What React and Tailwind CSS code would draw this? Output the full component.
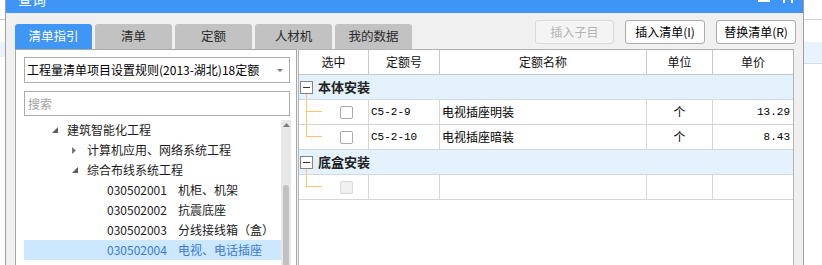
import React from "react";

const tabs = ["清单指引", "清单", "定额", "人材机", "我的数据"];

const treeRows = [
  { level: 0, open: true, text: "建筑智能化工程" },
  { level: 1, open: false, text: "计算机应用、网络系统工程" },
  { level: 1, open: true, text: "综合布线系统工程" },
  { level: 2, code: "030502001", text: "机柜、机架" },
  { level: 2, code: "030502002", text: "抗震底座" },
  { level: 2, code: "030502003", text: "分线接线箱（盒）" },
  { level: 2, code: "030502004", text: "电视、电话插座", selected: true },
];

const groups = [
  {
    name: "本体安装",
    rows: [
      { code: "C5-2-9", name: "电视插座明装", unit: "个", price: "13.29" },
      { code: "C5-2-10", name: "电视插座暗装", unit: "个", price: "8.43" },
    ],
  },
  { name: "底盒安装", rows: [{ empty: true }] },
];

const ArrowOpen = () => (
  <svg width="6" height="6" viewBox="0 0 6 6">
    <polygon points="6,0 6,6 0,6" fill="#5c5c5c" />
  </svg>
);

const ArrowClosed = () => (
  <svg width="4" height="7" viewBox="0 0 4 7">
    <polygon points="0,0 4,3.5 0,7" fill="#767676" />
  </svg>
);

const TreeRow = ({ row }) => {
  const pad = row.level === 0 ? "pl-[28px]" : row.level === 1 ? "pl-[48px]" : "pl-[83px]";
  return (
    <div
      className={`h-[20px] flex items-center ${pad} ${
        row.selected ? "bg-[#cce8ff] text-[#3b79d5]" : "text-[#1b1b1b]"
      }`}
    >
      {row.level < 2 ? (
        <>
          <div className="w-[15px] flex items-center">
            {row.open ? <ArrowOpen /> : <ArrowClosed />}
          </div>
          <span>{row.text}</span>
        </>
      ) : (
        <>
          <span className="w-[71px]">{row.code}</span>
          <span>{row.text}</span>
        </>
      )}
    </div>
  );
};

const DataRow = ({ row, last }) => (
  <div className="h-[25px] grid grid-cols-[70px_71px_207px_66px_1fr] border-b border-[#d6d6d6]">
    <div className="flex border-r border-[#d6d6d6]">
      <div className="w-[7px]" />
      <div className="w-[16px] flex flex-col">
        <div className="h-[12px] border-l border-b border-[#fdc66c]" />
        {!last && <div className="flex-1 border-l border-[#fdc66c]" />}
      </div>
      <div className="ml-[18px] flex items-center">
        <div
          className={`w-[13px] h-[13px] rounded-[2px] border ${
            row.empty ? "bg-[#f0f0f0] border-[#d9d9d9]" : "bg-white border-[#a9a9a9]"
          }`}
        />
      </div>
    </div>
    <div className="flex items-center pl-[2px] border-r border-[#d6d6d6] font-['Liberation_Mono',monospace] text-[11px]">
      {row.code}
    </div>
    <div className="flex items-center pl-[2px] border-r border-[#d6d6d6]">{row.name}</div>
    <div className="flex items-center justify-center border-r border-[#d6d6d6]">{row.unit}</div>
    <div className="flex items-center justify-end pr-[3px] font-['Liberation_Mono',monospace] text-[11px]">
      {row.price}
    </div>
  </div>
);

export default function App() {
  return (
    <div className="w-[822px] h-[265px] bg-white flex overflow-hidden font-['Noto_Sans_CJK_SC',sans-serif] text-[12px] text-black">
      {/* outside, left */}
      <div className="w-[5px] flex flex-col">
        <div className="h-[19px]" />
        <div className="h-px bg-[#c4c4c4]" />
        <div className="h-[22px]" />
        <div className="h-[15px] bg-[#e9f3fd]" />
      </div>

      {/* dialog */}
      <div className="w-[799px] h-full flex flex-col bg-[#f0f0f0] border-x border-[#9e9e9e]">
        {/* title bar */}
        <div className="h-[13px] shrink-0 bg-[#3e95f5] flex overflow-hidden">
          <div className="pl-[12px] -mt-[8px] text-[14px] leading-[14px] text-white">查询</div>
          <div className="flex-1" />
          <div className="w-[12px] h-[2px] bg-white" />
          <div className="ml-[13px] flex gap-[6px]">
            <div className="w-[2px] h-[3px] bg-white" />
            <div className="w-[2px] h-[3px] bg-white" />
          </div>
          <div className="w-[10px]" />
        </div>

        {/* tabs and buttons */}
        <div className="h-[36px] shrink-0 flex pl-[9px] pr-[7px]">
          <div className="flex items-end gap-[3px]">
            {tabs.map((t, i) => (
              <div
                key={t}
                className={`w-[77px] h-[25px] rounded-t-[3px] flex items-center justify-center text-[12.5px] ${
                  i === 0 ? "bg-[#3f96f4] text-white" : "bg-[#c2c2c2] text-[#2b2b2b]"
                }`}
              >
                {t}
              </div>
            ))}
          </div>
          <div className="flex-1" />
          <div className="mt-[7px] flex gap-[11px] h-[24px]">
            <div className="w-[79px] rounded-[3px] border border-[#dadada] bg-[#f4f4f4] text-[#b3b3b3] flex items-center justify-center">
              插入子目
            </div>
            <div className="w-[80px] rounded-[3px] border border-[#adadad] bg-[#fdfdfd] flex items-center justify-center">
              插入清单(I)
            </div>
            <div className="w-[80px] rounded-[3px] border border-[#adadad] bg-[#fdfdfd] flex items-center justify-center">
              替换清单(R)
            </div>
          </div>
        </div>

        {/* main */}
        <div className="flex-1 flex pl-[9px] pr-[9px] min-h-0">
          {/* left panel */}
          <div className="w-[282px] bg-white border-x border-t border-[#a8a8a8] pl-[8px] pt-[7px] flex flex-col">
            <div className="w-[266px] h-[26px] border border-[#ababab] flex items-center pl-[2px] pr-[6px]">
              <span className="flex-1">工程量清单项目设置规则(2013-湖北)18定额</span>
              <svg width="6" height="3" viewBox="0 0 6 3">
                <polygon points="0,0 6,0 3,3" fill="#7a7a7a" />
              </svg>
            </div>
            <div className="mt-[8px] w-[266px] h-[25px] border border-[#ababab] flex items-center pl-[3px] text-[#a3a3a3]">
              搜索
            </div>
            <div className="mt-[4px] w-[267px] flex flex-1">
              <div className="w-[257px] flex flex-col">
                {treeRows.map((r, i) => (
                  <TreeRow key={i} row={r} />
                ))}
              </div>
              <div className="w-[10px] bg-[#e8e8e8] flex flex-col items-center">
                <svg className="mt-[3px]" width="7" height="4" viewBox="0 0 7 4">
                  <polygon points="0,4 7,4 3.5,0" fill="#7d7d7d" />
                </svg>
                <div className="h-[58px]" />
                <div className="w-[6px] flex-1 rounded-t-[3px] bg-[#c1c1c1]" />
              </div>
            </div>
          </div>

          <div className="w-px" />

          {/* right table */}
          <div className="flex-1 bg-white border-x border-t border-[#b4b4b4] flex flex-col">
            <div className="h-[25px] grid grid-cols-[70px_71px_207px_66px_1fr] border-b border-[#c8c8c8] text-[#111]">
              <div className="flex items-center justify-center border-r border-[#c8c8c8]">选中</div>
              <div className="flex items-center justify-center border-r border-[#c8c8c8]">定额号</div>
              <div className="flex items-center justify-center border-r border-[#c8c8c8]">定额名称</div>
              <div className="flex items-center justify-center border-r border-[#c8c8c8]">单位</div>
              <div className="flex items-center justify-center">单价</div>
            </div>
            {groups.map((g) => (
              <React.Fragment key={g.name}>
                <div className="h-[25px] flex bg-[#e4f2fe] border-b border-[#d0d8e0]">
                  <div className="ml-[1px] flex flex-col pt-[6px]">
                    <div className="w-[13px] h-[13px] border border-[#848484] bg-white flex items-center justify-center">
                      <div className="w-[7px] h-px bg-[#333]" />
                    </div>
                    <div className="ml-[6px] w-px flex-1 bg-[#fdc66c]" />
                  </div>
                  <div className="ml-[5px] flex items-center font-bold text-[13px] text-[#222]">{g.name}</div>
                </div>
                {g.rows.map((r, i) => (
                  <DataRow key={i} row={r} last={i === g.rows.length - 1} />
                ))}
              </React.Fragment>
            ))}
          </div>
        </div>
      </div>

      {/* outside, right */}
      <div className="flex-1 flex flex-col">
        <div className="h-[19px]" />
        <div className="h-px bg-[#d2d2d2]" />
        <div className="h-[22px]" />
        <div className="h-[22px] bg-[#e9f3fd] border-b border-[#d3dbe5]" />
      </div>
    </div>
  );
}
